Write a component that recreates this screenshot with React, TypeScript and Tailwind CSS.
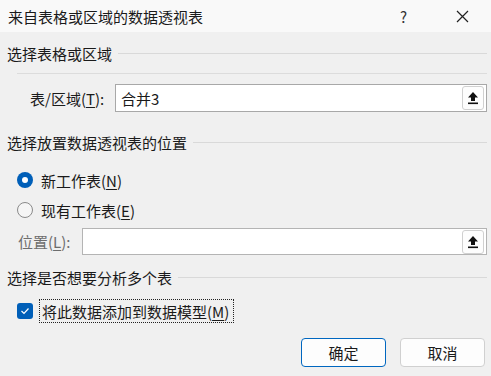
const font = { fontFamily: '"Noto Sans CJK SC", "Microsoft YaHei", sans-serif' };

function UploadButton() {
  return (
    <div className="mr-[2px] flex h-[24px] w-[22px] items-center justify-center rounded-[3px] border border-[#d0d0d0] bg-[#fdfdfd]">
      <svg width="12" height="14" viewBox="0 0 12 14">
        <path d="M6 1 L11 6.5 L8 6.5 L8 10 L4 10 L4 6.5 L1 6.5 Z" fill="#111" />
        <rect x="1" y="11.5" width="10" height="1.6" fill="#111" />
      </svg>
    </div>
  );
}

function SectionHeader({ title }: { title: string }) {
  return (
    <div className="flex h-[18px] items-center pl-[7px] pr-[4px]">
      <span className="whitespace-nowrap text-[15px] leading-none text-[#1a1a1a]">{title}</span>
      <div className="ml-[6px] h-px flex-1 bg-[#d9d9d9]" />
    </div>
  );
}

function Radio({ checked, children }: { checked?: boolean; children: React.ReactNode }) {
  return (
    <div className="flex h-[18px] items-center pl-[17px]">
      {checked ? (
        <span className="flex h-[16px] w-[16px] items-center justify-center rounded-full bg-[#005fb8]">
          <span className="h-[6px] w-[6px] rounded-full bg-white" />
        </span>
      ) : (
        <span className="h-[16px] w-[16px] rounded-full border border-[#8a8a8a] bg-[#f5f5f5]" />
      )}
      <span className="ml-[8px] whitespace-nowrap text-[15px] leading-none text-[#1a1a1a]">{children}</span>
    </div>
  );
}

export default function App() {
  return (
    <div className="h-[376px] w-[491px] bg-[#f0f0f0]" style={font}>
      <div className="flex h-[32px] items-center bg-[#f9f9f9] pl-[8px]">
        <span className="whitespace-nowrap text-[15px] leading-none text-[#1a1a1a]">来自表格或区域的数据透视表</span>
        <span className="ml-auto text-[15px] leading-none text-[#333]">?</span>
        <svg className="ml-[49px] mr-[22px]" width="13" height="13" viewBox="0 0 13 13">
          <path d="M1 1 L12 12 M12 1 L1 12" stroke="#222" strokeWidth="1.2" />
        </svg>
      </div>

      <div className="mt-[12px]">
        <SectionHeader title="选择表格或区域" />
      </div>
      <div className="ml-[17px] mr-[4px] mt-[11px] h-px bg-[#dcdcdc]" />

      <div className="mt-[10px] flex h-[28px] items-center pr-[4px]">
        <span className="w-[103px] shrink-0 whitespace-nowrap pl-[30px] text-[15px] leading-none text-[#1a1a1a]">
          表/区域(<span className="underline underline-offset-2">T</span>):
        </span>
        <div className="ml-[12px] flex h-full flex-1 items-center border border-[#a8a8a8] bg-white pl-[5px]">
          <span className="text-[15px] leading-none text-[#1a1a1a]">合并3</span>
          <span className="ml-auto">
            <UploadButton />
          </span>
        </div>
      </div>

      <div className="mt-[21px]">
        <SectionHeader title="选择放置数据透视表的位置" />
      </div>

      <div className="mt-[20px]">
        <Radio checked>
          新工作表(<span className="underline underline-offset-2">N</span>)
        </Radio>
      </div>
      <div className="mt-[12px]">
        <Radio>
          现有工作表(<span className="underline underline-offset-2">E</span>)
        </Radio>
      </div>

      <div className="mt-[9px] flex h-[27px] items-center pr-[4px]">
        <span className="w-[82px] shrink-0 whitespace-nowrap pl-[18px] text-[15px] leading-none text-[#6d6d6d]">
          位置(<span className="underline underline-offset-2">L</span>):
        </span>
        <div className="flex h-full flex-1 items-center justify-end border border-[#b4b4b4] bg-white">
          <UploadButton />
        </div>
      </div>

      <div className="mt-[13px]">
        <SectionHeader title="选择是否想要分析多个表" />
      </div>

      <div className="mt-[13px] flex h-[24px] items-center pl-[17px]">
        <span className="flex h-[16px] w-[16px] items-center justify-center rounded-[3px] bg-[#005fb8]">
          <svg width="10" height="8" viewBox="0 0 10 8">
            <path d="M1.5 4 L4 6.5 L8.5 1.5" stroke="#fff" strokeWidth="1.2" fill="none" />
          </svg>
        </span>
        <span className="ml-[6px] flex h-full w-[195px] items-center whitespace-nowrap border border-dotted border-[#222] pl-[2px] text-[15px] leading-none text-[#1a1a1a]">
          将此数据添加到数据模型(<span className="underline underline-offset-2">M</span>)
        </span>
      </div>

      <div className="mt-[15px] flex justify-end gap-[14px] pr-[6px]">
        <button className="flex h-[29px] w-[85px] items-center justify-center rounded-[4px] border border-[#0067c0] bg-[#fdfdfd] text-[15px] leading-none text-[#1a1a1a]">
          确定
        </button>
        <button className="flex h-[29px] w-[85px] items-center justify-center rounded-[4px] border border-[#d0d0d0] bg-[#fdfdfd] text-[15px] leading-none text-[#1a1a1a]">
          取消
        </button>
      </div>
    </div>
  );
}
